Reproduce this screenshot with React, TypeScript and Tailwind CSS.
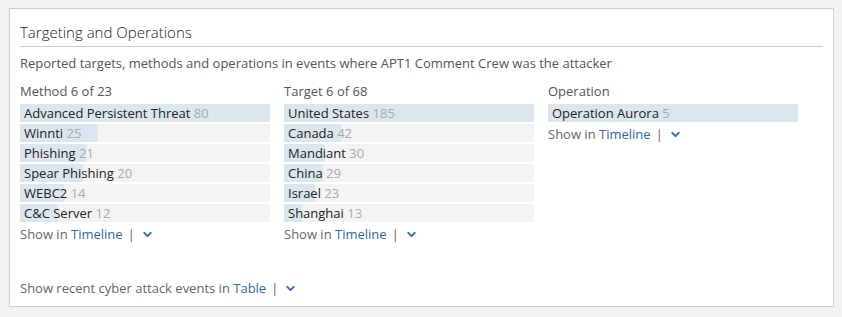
import { ChevronDown } from 'lucide-react'

type Item = { label: string; count: number }

const methods: Item[] = [
  { label: 'Advanced Persistent Threat', count: 80 },
  { label: 'Winnti', count: 25 },
  { label: 'Phishing', count: 21 },
  { label: 'Spear Phishing', count: 20 },
  { label: 'WEBC2', count: 14 },
  { label: 'C&C Server', count: 12 },
]

const targets: Item[] = [
  { label: 'United States', count: 185 },
  { label: 'Canada', count: 42 },
  { label: 'Mandiant', count: 30 },
  { label: 'China', count: 29 },
  { label: 'Israel', count: 23 },
  { label: 'Shanghai', count: 13 },
]

const operations: Item[] = [{ label: 'Operation Aurora', count: 5 }]

function ShowIn({ prefix, link }: { prefix: string; link: string }) {
  return (
    <div className="flex items-center h-[18px] text-[#666]">
      <span>{prefix}&nbsp;</span>
      <span className="text-[#2c6aa8]">{link}</span>
      <span className="text-[#a4461f] ml-[5px] mr-[6px]">|</span>
      <ChevronDown size={13} strokeWidth={3.5} className="text-[#2c6aa8]" />
    </div>
  )
}

function Column({ title, items }: { title: string; items: Item[] }) {
  const max = Math.max(...items.map((i) => i.count))
  return (
    <div className="w-[250px]">
      <div className="h-[18px] leading-[18px] text-[#555] mb-1">{title}</div>
      <div className="flex flex-col gap-[2px]">
        {items.map((item) => (
          <div key={item.label} className="relative h-[18px] bg-[#f3f3f3]">
            <div
              className="absolute left-0 top-0 h-full bg-[#dce6ef]"
              style={{ width: `${(item.count / max) * 100}%` }}
            />
            <div className="relative pl-1 leading-[18px] text-[#222] whitespace-nowrap">
              {item.label} <span className="text-[#aaa]">{item.count}</span>
            </div>
          </div>
        ))}
      </div>
      <div className="mt-[3px]">
        <ShowIn prefix="Show in" link="Timeline" />
      </div>
    </div>
  )
}

export default function App() {
  return (
    <div
      className="w-[842px] h-[317px] bg-[#f2f2f2] pt-2 pl-[9px] text-[13px] leading-[18px]"
      style={{ fontFamily: '"Open Sans", "Liberation Sans", sans-serif' }}
    >
      <div className="w-[825px] h-[299px] border border-[#cfcfcf] bg-white px-[10px] pt-3">
        <h2 className="text-[15px] font-light leading-[22px] text-[#1a1a1a] pb-[3px] border-b border-[#ccc]">
          Targeting and Operations
        </h2>
        <p className="mt-[7px] text-[#555]">
          Reported targets, methods and operations in events where APT1 Comment Crew was the attacker
        </p>
        <div className="mt-[10px] flex gap-[14px]">
          <Column title="Method 6 of 23" items={methods} />
          <Column title="Target 6 of 68" items={targets} />
          <Column title="Operation" items={operations} />
        </div>
        <div className="mt-[36px]">
          <ShowIn prefix="Show recent cyber attack events in" link="Table" />
        </div>
      </div>
    </div>
  )
}
